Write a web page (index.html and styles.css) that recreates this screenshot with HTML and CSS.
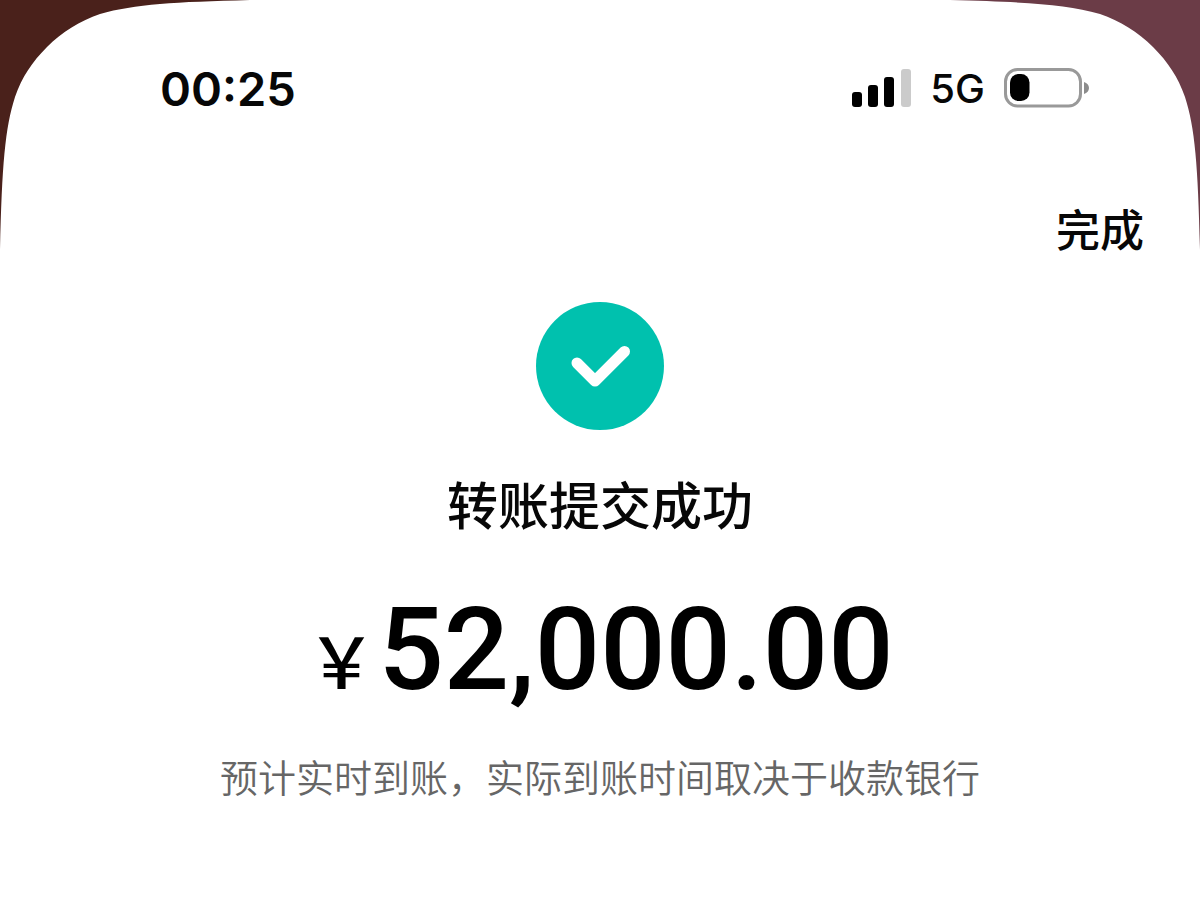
FILE: index.html
```html
<!DOCTYPE html>
<html lang="zh-CN">
<head>
    <meta charset="UTF-8">
    <meta name="viewport" content="width=device-width, initial-scale=1.0">
    <title>转账提交成功</title>
    <link rel="stylesheet" href="styles.css">
</head>
<body>
    <div class="screen">
        <svg class="corner corner-left" viewBox="0 0 250 250" aria-hidden="true">
            <path d="M0 0H250C175 2 135 4 100 14C80 21 62 32 47 47C32 62 22 77 15 97C5 128 2 165 0 250Z"/>
        </svg>
        <svg class="corner corner-right" viewBox="0 0 250 250" aria-hidden="true">
            <path d="M0 0H250C175 2 135 4 100 14C80 21 62 32 47 47C32 62 22 77 15 97C5 128 2 165 0 250Z"/>
        </svg>

        <header class="status-bar">
            <span class="time">00:25</span>
            <div class="status-icons">
                <svg class="signal" width="60" height="38" viewBox="0 0 60 38" aria-hidden="true">
                    <rect x="1" y="23" width="10" height="15" rx="3"/>
                    <rect x="17" y="16" width="10" height="22" rx="3"/>
                    <rect x="33" y="8" width="10" height="30" rx="3"/>
                    <rect class="off" x="50" y="0" width="10" height="38" rx="3"/>
                </svg>
                <span class="network">5G</span>
                <svg class="battery" width="86" height="40" viewBox="0 0 86 40" aria-hidden="true">
                    <rect class="shell" x="1.5" y="1.5" width="75" height="36.5" rx="12"/>
                    <rect x="6" y="6" width="19.5" height="27" rx="8.5"/>
                    <path class="cap" d="M80 14C83 15 85 17 85 20C85 23 83 25 80 26Z"/>
                </svg>
            </div>
        </header>

        <nav class="nav-bar">
            <button class="done-btn" type="button">完成</button>
        </nav>

        <main class="result">
            <svg class="result-icon" width="128" height="128" viewBox="0 0 128 128" aria-hidden="true">
                <circle cx="64" cy="64" r="64"/>
                <path d="M41 61L59 79L88.5 49.5"/>
            </svg>
            <h1 class="result-title">转账提交成功</h1>
            <p class="amount"><span class="currency">￥</span>52,000.00</p>
            <p class="note">预计实时到账，实际到账时间取决于收款银行</p>
        </main>
    </div>
</body>
</html>
```
FILE: styles.css
```css
* {
    margin: 0;
    padding: 0;
    box-sizing: border-box;
}

body {
    font-family: Inter, "Noto Sans CJK SC", sans-serif;
    background: #fff;
    color: #070707;
}

.screen {
    position: relative;
    min-height: 100vh;
    padding-top: 58px;
}

/* rounded display corners */
.corner {
    position: absolute;
    top: 0;
    width: 250px;
    height: 250px;
}

.corner-left {
    left: 0;
    fill: #4a211b;
}

.corner-right {
    right: 0;
    fill: #6b3c47;
    transform: scaleX(-1);
}

.status-bar {
    position: relative;
    display: flex;
    justify-content: space-between;
    align-items: center;
    height: 60px;
    padding: 0 110px 0 160px;
}

.time {
    font-size: 47px;
    font-weight: 600;
}

.status-icons {
    display: flex;
    align-items: center;
    gap: 19px;
}

.signal .off {
    fill: #cbcbcb;
}

.network {
    font-size: 40px;
    font-weight: 500;
}

.battery .shell {
    fill: none;
    stroke: #999;
    stroke-width: 3;
}

.battery .cap {
    fill: #8c8c8c;
}

.nav-bar {
    position: relative;
    display: flex;
    justify-content: flex-end;
    padding: 80px 56px 0;
}

.done-btn {
    border: none;
    background: none;
    color: inherit;
    font-family: inherit;
    font-size: 44px;
    font-weight: 500;
    line-height: 66px;
    cursor: pointer;
}

.result {
    display: flex;
    flex-direction: column;
    align-items: center;
    padding-top: 38px;
    text-align: center;
}

.result-icon circle {
    fill: #00c1ae;
}

.result-icon path {
    fill: none;
    stroke: #fff;
    stroke-width: 11;
    stroke-linecap: round;
    stroke-linejoin: round;
}

.result-title {
    margin-top: 40px;
    font-size: 51px;
    font-weight: 500;
    line-height: 74px;
}

.amount {
    margin-top: 38px;
    color: #000;
    font-family: Roboto, sans-serif;
    font-size: 115px;
    font-weight: 500;
    line-height: 136px;
}

.currency {
    margin-right: 2px;
    font-family: "Noto Sans CJK SC", sans-serif;
    font-size: 70px;
    line-height: 1;
}

.note {
    margin-top: 32px;
    color: #666;
    font-size: 38px;
    font-weight: 350;
    line-height: 56px;
}
```
